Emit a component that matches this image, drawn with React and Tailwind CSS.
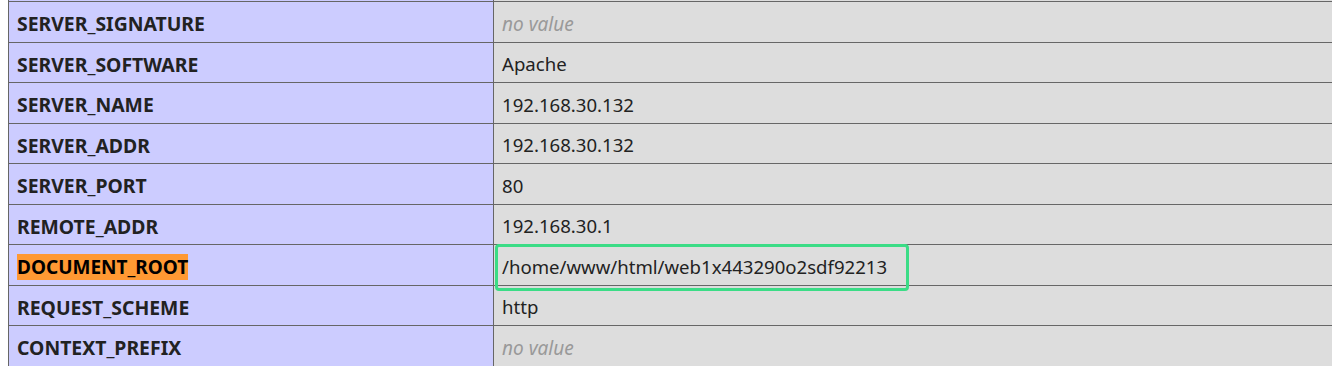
import React from "react";

const rows = [
  ["SERVER_SIGNATURE", null],
  ["SERVER_SOFTWARE", "Apache"],
  ["SERVER_NAME", "192.168.30.132"],
  ["SERVER_ADDR", "192.168.30.132"],
  ["SERVER_PORT", "80"],
  ["REMOTE_ADDR", "192.168.30.1"],
  ["DOCUMENT_ROOT", "/home/www/html/web1x443290o2sdf92213", true],
  ["REQUEST_SCHEME", "http"],
  ["CONTEXT_PREFIX", null],
];

export default function App() {
  return (
    <div
      className="w-[1332px] h-[366px] overflow-hidden bg-white text-[#222]"
      style={{ fontFamily: '"Noto Sans", "Open Sans", sans-serif' }}
    >
      <div className="ml-[8px] w-[1400px] border-l border-[#666]">
        <div className="grid grid-cols-[485px_1fr] h-[1px]">
          <div className="bg-[#ccccff] border-r border-[#666]" />
          <div className="bg-[#dddddd]" />
        </div>
        {rows.map(([k, v, hl]) => (
          <div
            key={k}
            className="grid grid-cols-[485px_1fr] h-[40.5px] border-t border-[#666]"
          >
            <div className="bg-[#ccccff] border-r border-[#666] flex items-center pl-[8px] pt-[4px] text-[19.4px] font-bold">
              {hl ? (
                <span className="bg-[#ff9933] text-black leading-[26px] text-[19px]">{k}</span>
              ) : (
                <span>{k}</span>
              )}
            </div>
            <div className="bg-[#dddddd] flex items-center pl-[8px] pt-[4px] text-[18.6px] relative">
              {v === null ? (
                <span className="italic text-[#999] text-[19px]">no value</span>
              ) : (
                <span>{v}</span>
              )}
              {hl && (
                <div className="absolute z-10 left-[1px] top-[-1px] w-[414px] h-[47px] border-[3px] border-[#3bdc86] rounded-[4px]" />
              )}
            </div>
          </div>
        ))}
      </div>
    </div>
  );
}
